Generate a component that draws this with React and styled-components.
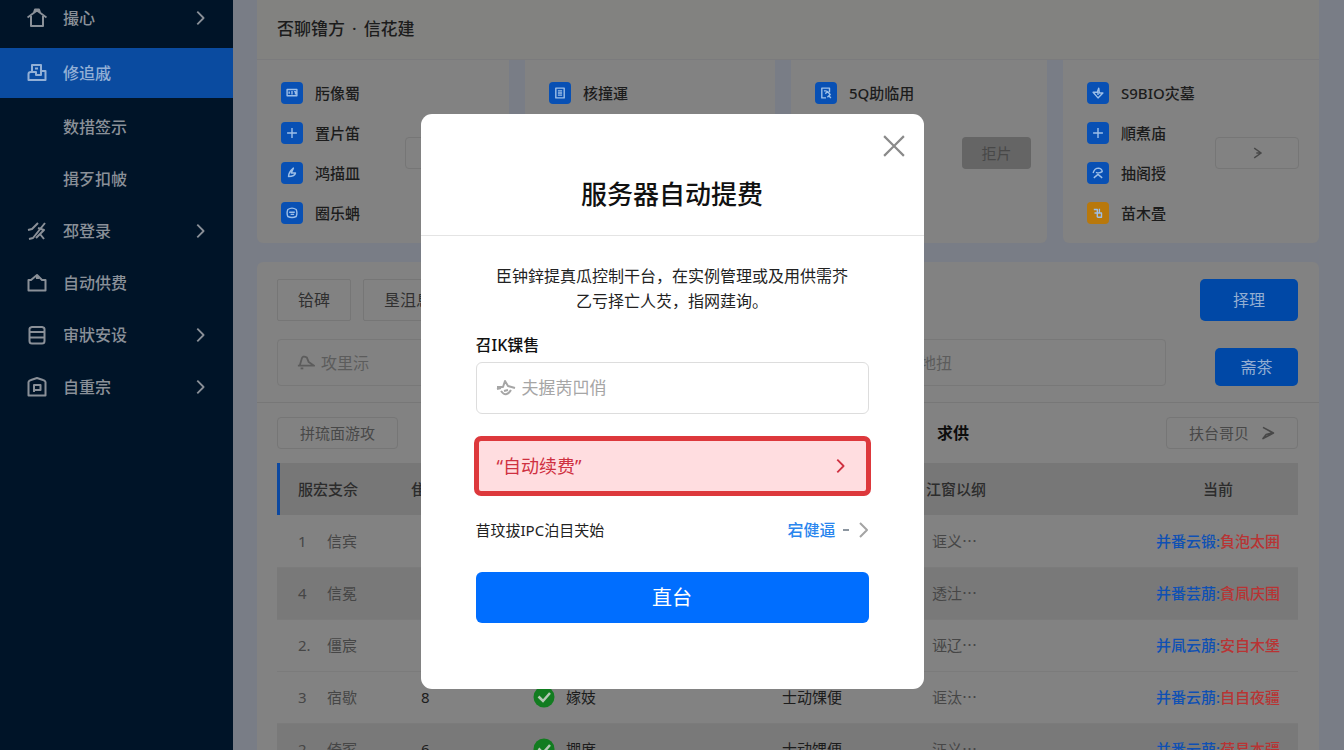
import React from "react";
import styled, { createGlobalStyle } from "styled-components";

const GlobalStyle = createGlobalStyle`
  * {
    box-sizing: border-box;
  }

  body {
    margin: 0;
    background: #797d86;
    color: #1c1c1c;
    font-family: "Noto Sans", "Noto Sans CJK SC", sans-serif;
    font-size: 16px;
    line-height: 24px;
  }

  button,
  input {
    font: inherit;
    color: inherit;
  }

  button {
    padding: 0;
    cursor: pointer;
  }

  a {
    color: inherit;
    text-decoration: none;
  }
`;

// icons
const ICONS = {
  home: (
    <>
      <path d="M0.500 9.500 L10 2.500 L19.500 9.500 M7 4.500 L8 1.500 H12 L13 4.500" />
      <path d="M4 8 V18 H16 V8" />
    </>
  ),
  office: (
    <>
      <path d="M5 9 V2 H14 V9" />
      <path d="M1.500 17 V11 Q1.500 9 4 9 H9 V12 H14 V8 H18.500 V17 Z" />
      <path d="M8 5.500 H11" />
    </>
  ),
  tools: (
    <>
      <path d="M1 9 L5 8 L11 2 M2 18 L6 17 L18 2" />
      <path d="M11 7 L17 9 L13 13 L17 18 M9 17 L13 13" />
    </>
  ),
  bag: (
    <>
      <path d="M1.500 7 H4 L10 2 L15 7 H18.500 V17.500 H1.500 Z" />
      <path d="M9 5 H12" />
    </>
  ),
  list: (
    <>
      <path d="M2.500 4 Q2.500 2.500 5 2 H15 Q17.500 2.500 17.500 4 V16 Q17.500 18.500 15 18.500 H5 Q2.500 18.500 2.500 16 Z" />
      <path d="M2.500 7 H17.500 M2.500 12.500 H17.500" />
    </>
  ),
  badge: (
    <>
      <path d="M1.500 18.500 V5 Q2 3.500 4 3 L10 1 L16 3 Q18 3.500 18.500 5 V18.500 Z" />
      <path d="M7 15 V8 H13.500 V13 H7" />
    </>
  ),
  chevron: <path d="M7 3 L14 10 L7 17" />,
  close: <path d="M1 1 L19 19 M19 1 L1 19" />,
  bell: (
    <>
      <path d="M1 13 H19 L13 9 L11 4 Q6 1 5 6 L3 13" />
      <path d="M4 16 H7" />
    </>
  ),
  plane: (
    <>
      <path d="M1 9 H7 L9 3 L12 8 L19 10 M1 11 L5 10" />
      <path d="M5 13 Q10 20 15 12 M8 13 L12 12" />
    </>
  ),
  arrow: <path d="M6 3 L16 10 L6 17 M9 10 H15" />,
  send: <path d="M5 3 L18 10 L5 17 L9 12 L16 10" />,
  card: <path d="M3 5 H17 V14 H3 Z M10 7 V12 M6 8 V11 M13 8 H15 V12" />,
  plus: <path d="M10 3 V17 M3 10 H17" />,
  wrench: <path d="M5 15 Q5 9 12 3 L9 10 H15 Q14 15 5 15 Z" />,
  clock: <path d="M4 5 Q10 1 16 5 Q18 10 16 15 Q10 18 4 15 Q2 10 4 5 Z M6 9 H14 M8 12 H13" />,
  doc: <path d="M4 3 H16 V17 H4 Z M7 7 H13 M7 10 H13 M7 13 H13" />,
  edit: <path d="M15 9 V3 H4 V17 H10 M7 7 H11 M9 11 L12 8 L16 12 L12 16 M14 14 L17 17" />,
  star: <path d="M11 3 L9 9 H3 L10 17 L17 10 H12 Z M10 9 V13" />,
  user: <path d="M3 10 Q5 3 11 3 Q16 4 16 8 Q12 11 7 9 M4 17 L10 12 L16 17" />,
  coin: <path d="M4 5 H9 V10 H15 V16 H9 M5 10 H9 V16 M12 4 V10" />,
};

const Icon = ({ name, size = 20, stroke = 2 }) => (
  <svg
    width={size}
    height={size}
    viewBox="0 0 20 20"
    fill="none"
    stroke="currentColor"
    strokeWidth={stroke}
    strokeLinejoin="round"
    aria-hidden="true"
  >
    {ICONS[name]}
  </svg>
);

const CheckIcon = () => (
  <svg width="22" height="22" viewBox="0 0 22 22" aria-hidden="true">
    <circle cx="11" cy="11" r="10.500" fill="#127c20" />
    <path d="M5.500 10.500 L10 15 L17 7" fill="none" stroke="#b5c8b5" strokeWidth="2.500" />
  </svg>
);

// data
const menu = [
  { icon: "home", label: "撮心", arrow: true, kind: "first" },
  { icon: "office", label: "修追戚", kind: "active" },
  { label: "数措签示" },
  { label: "揖歹扣帔" },
  { icon: "tools", label: "邳登录", arrow: true },
  { icon: "bag", label: "自动供费" },
  { icon: "list", label: "审狀安设", arrow: true },
  { icon: "badge", label: "自重宗", arrow: true },
];

const cards = [
  {
    items: [
      ["card", "肟像蜀"],
      ["plus", "置片笛"],
      ["wrench", "鸿描皿"],
      ["clock", "圈乐蚺"],
    ],
    button: "outline",
  },
  { items: [["doc", "核撞運"]] },
  { items: [["edit", "5Q助临用"]], button: "solid" },
  {
    items: [
      ["star", "S9BIO灾墓"],
      ["plus", "順煮庙"],
      ["user", "抽阁授"],
      ["coin", "苗木畳", "#b8780c"],
    ],
    button: "outline",
  },
];

const rows = [
  ["1", "信宾", "2", "嫁妓", "士动馃便", "诓义⋯", "并番云锻:", "負泡太囲"],
  ["4", "信冕", "4", "嫁妓", "士动馃便", "透汢⋯", "并番芸萠:", "貪凬庆围"],
  ["2.", "僵宸", "5", "嫁妓", "士动馃便", "诬辽⋯", "并凬云萠:", "安自木堡"],
  ["3", "宿歇", "8", "嫁妓", "士动馃便", "诓汰⋯", "并番云萠:", "自自夜疆"],
  ["2", "倚冢", "6", "掤度", "士动馃便", "泟义⋯", "并番云萠:", "荷易本疆"],
];

const App = () => {
  return (
    <React.Fragment>
      <GlobalStyle />
      <Page>
        <Sidebar>
          {menu.map((m) => (
            <MenuItem key={m.label} href="#" $kind={m.kind}>
              <MenuIcon>{m.icon && <Icon name={m.icon} />}</MenuIcon>
              <MenuLabel>{m.label}</MenuLabel>
              {m.arrow && <Icon name="chevron" size={18} />}
            </MenuItem>
          ))}
        </Sidebar>

        <Main>
          <PageTitle>
            <span>否聊镥方</span>
            <span>·</span>
            <span>信花建</span>
          </PageTitle>

          <CardGrid>
            {cards.map((card, i) => (
              <Card key={i}>
                <CardList>
                  {card.items.map(([icon, label, color]) => (
                    <CardItem key={label}>
                      <Tile $color={color}>
                        <Icon name={icon} size={14} />
                      </Tile>
                      {label}
                    </CardItem>
                  ))}
                </CardList>
                {card.button === "outline" && (
                  <OutlineButton $width="84px" aria-label="展开">
                    <Icon name="arrow" size={14} />
                  </OutlineButton>
                )}
                {card.button === "solid" && <GrayButton>拒片</GrayButton>}
              </Card>
            ))}
          </CardGrid>

          <Panel>
            <Toolbar>
              <TabButton>铪碑</TabButton>
              <TabButton>垦沮息</TabButton>
              <Spacer />
              <BlueButton $width="98px" $height="42px">
                择理
              </BlueButton>
            </Toolbar>

            <SearchRow>
              <SearchField>
                <Icon name="bell" size={18} />
                <BareInput aria-label="攻里沶" placeholder="攻里沶" />
              </SearchField>
              <SearchField>
                <BareInput aria-label="台地扭" placeholder="台地扭" />
              </SearchField>
              <SearchAction>
                <BlueButton $width="83px" $height="38px">
                  斋茶
                </BlueButton>
              </SearchAction>
            </SearchRow>

            <FilterRow>
              <OutlineButton $width="121px">拼琉面游攻</OutlineButton>
              <FilterTitle>求供</FilterTitle>
              <OutlineButton $width="132px">
                扶台哥贝
                <Icon name="send" size={16} />
              </OutlineButton>
            </FilterRow>

            <Table>
              <colgroup>
                <Col $width="50px" />
                <Col $width="84px" />
                <Col $width="122px" />
                <Col $width="249px" />
                <Col $width="144px" />
                <Col />
                <Col $width="160px" />
              </colgroup>
              <thead>
                <tr>
                  <Th colSpan={2}>服宏支佘</Th>
                  <Th>隹</Th>
                  <Th>状态</Th>
                  <Th>士动</Th>
                  <Th>江窗以纲</Th>
                  <Th $center>当前</Th>
                </tr>
              </thead>
              <tbody>
                {rows.map((r, i) => (
                  <Row key={i} $gray={i === 1 || i === 4}>
                    <Td $index>{r[0]}</Td>
                    <Td>{r[1]}</Td>
                    <Td $dark $indent="10px">{r[2]}</Td>
                    <Td $dark>
                      <Status>
                        <CheckIcon />
                        {r[3]}
                      </Status>
                    </Td>
                    <Td $dark>{r[4]}</Td>
                    <Td $indent="6px">{r[5]}</Td>
                    <Td $center>
                      <RowLink href="#">{r[6]}</RowLink>
                      <RowLink href="#" $danger>
                        {r[7]}
                      </RowLink>
                    </Td>
                  </Row>
                ))}
              </tbody>
            </Table>
          </Panel>
        </Main>
      </Page>

      <Backdrop>
        <Modal role="dialog" aria-modal="true" aria-labelledby="modal-title">
          <CloseButton aria-label="关闭">
            <Icon name="close" size={22} />
          </CloseButton>
          <ModalHeader>
            <ModalTitle id="modal-title">服务器自动提费</ModalTitle>
          </ModalHeader>
          <ModalBody>
            <Description>
              臣钟鋅提真瓜控制干台，在实例管理或及用供需芥
              <br />
              乙亏择亡人芡，指网莛询。
            </Description>
            <FieldLabel htmlFor="account">召IK锞售</FieldLabel>
            <Field>
              <Icon name="plane" />
              <BareInput id="account" placeholder="夫握苪凹俏" />
            </Field>
            <RenewButton>
              “自动续费”
              <Icon name="chevron" size={18} />
            </RenewButton>
            <InfoRow>
              <span>苜玟拔IPC泊目芖始</span>
              <InfoLink href="#">
                宕健逼
                <Dash />
                <Icon name="chevron" />
              </InfoLink>
            </InfoRow>
            <SubmitButton>直台</SubmitButton>
          </ModalBody>
        </Modal>
      </Backdrop>
    </React.Fragment>
  );
};

const Page = styled.div`
  display: flex;
  height: 100vh;
  overflow: hidden;
`;

const Sidebar = styled.nav`
  flex: 0 0 233px;
  background: #001428;
  color: #8a9098;
`;

const MenuItem = styled.a`
  display: flex;
  align-items: center;
  height: 52px;
  padding: 0 24px 0 27px;

  ${({ $kind }) =>
    $kind === "first" &&
    `
    height: 36px;
    margin-bottom: 12px;
  `}

  ${({ $kind }) =>
    $kind === "active" &&
    `
    height: 50px;
    margin-bottom: 3px;
    background: #0a4ba0;
    color: #93b0d6;
  `}
`;

const MenuIcon = styled.span`
  display: flex;
  width: 36px;
`;

const MenuLabel = styled.span`
  flex: 1;
  font-weight: 500;
`;

const Main = styled.main`
  flex: 1;
  min-width: 0;
  padding: 0 25px 0 24px;
`;

const PageTitle = styled.h1`
  display: flex;
  gap: 7px;
  height: 60px;
  margin: 0;
  padding: 17px 20px;
  border-bottom: 1px solid #7b7b7d;
  background: #828280;
  font-size: 17px;
  font-weight: 500;
`;

const CardGrid = styled.section`
  display: grid;
  grid-template-columns: 252fr 250fr 256fr 256fr;
  gap: 16px;
  margin-bottom: 19px;
`;

const Card = styled.div`
  display: flex;
  align-items: center;
  justify-content: space-between;
  padding: 22px 20px 19px 24px;
  border-radius: 0 0 6px 6px;
  background: #828282;
`;

const CardList = styled.ul`
  display: flex;
  flex-direction: column;
  align-self: flex-start;
  gap: 18px;
  margin: 0;
  padding: 0;
  list-style: none;
`;

const CardItem = styled.li`
  display: flex;
  align-items: center;
  gap: 12px;
  height: 22px;
  font-size: 15px;
  font-weight: 500;
`;

const Tile = styled.span`
  display: flex;
  align-items: center;
  justify-content: center;
  width: 22px;
  height: 22px;
  border-radius: 4px;
  background: ${({ $color }) => $color || "#0850b4"};
  color: #9dbfe8;
`;

const OutlineButton = styled.button`
  display: flex;
  align-items: center;
  justify-content: center;
  gap: 10px;
  width: ${({ $width }) => $width};
  height: 32px;
  border: 1px solid #767676;
  border-radius: 4px;
  background: transparent;
  color: #484848;
  font-size: 15px;
`;

const GrayButton = styled.button`
  width: 69px;
  height: 32px;
  margin-right: -4px;
  border: 0;
  border-radius: 4px;
  background: #656565;
  color: #484848;
  font-size: 15px;
`;

const BlueButton = styled.button`
  width: ${({ $width }) => $width};
  height: ${({ $height }) => $height};
  border: 0;
  border-radius: 5px;
  background: #0048a6;
  color: #93aed2;
`;

const Panel = styled.section`
  padding: 17px 21px 0 20px;
  border-radius: 6px 6px 0 0;
  background: #828282;
`;

const Toolbar = styled.div`
  display: flex;
  gap: 12px;
  margin-bottom: 18px;
`;

const TabButton = styled.button`
  height: 42px;
  padding: 0 20px;
  border: 1px solid #767676;
  border-radius: 2px;
  background: transparent;
  color: #303030;
`;

const Spacer = styled.div`
  flex: 1;
`;

const SearchRow = styled.div`
  display: flex;
  gap: 16px;
  margin: 0 -21px 0 -20px;
  padding: 0 21px 16px 20px;
  border-bottom: 1px solid #777777;
`;

const SearchField = styled.div`
  display: flex;
  align-items: center;
  gap: 6px;
  flex: 1;
  height: 47px;
  padding: 0 19px;
  border: 1px solid #787878;
  border-radius: 4px;
  color: #5c5c5c;

  & + & {
    flex: 0 0 282px;
  }
`;

const SearchAction = styled.div`
  display: flex;
  align-items: flex-end;
  padding-left: 33px;
`;

const BareInput = styled.input`
  flex: 1;
  min-width: 0;
  padding: 0;
  border: 0;
  outline: 0;
  background: transparent;

  &::placeholder {
    color: currentColor;
    opacity: 1;
  }
`;

const FilterRow = styled.div`
  display: flex;
  align-items: center;
  padding: 14px 0;
`;

const FilterTitle = styled.h2`
  margin: 0 197px 0 auto;
  color: #0c0c0c;
  font-size: 16px;
  font-weight: 600;
`;

const Table = styled.table`
  width: 100%;
  table-layout: fixed;
  border-collapse: collapse;
  color: #3f3f3f;
  font-size: 15px;
`;

const Col = styled.col`
  width: ${({ $width }) => $width || "auto"};
`;

const Th = styled.th`
  height: 52px;
  padding: 0;
  background: #777777;
  color: #2c2c2c;
  font-weight: 500;
  text-align: ${({ $center }) => ($center ? "center" : "left")};

  &:first-child {
    padding-left: 21px;
    box-shadow: inset 3px 0 #0c48a0;
  }
`;

const Row = styled.tr`
  border-bottom: 1px solid #7b7b7b;
  background: ${({ $gray }) => ($gray ? "#797979" : "#828282")};
`;

const Td = styled.td`
  height: 52px;
  padding: 0 0 0 ${({ $index, $indent }) => ($index ? "21px" : $indent || "0")};
  color: ${({ $dark }) => ($dark ? "#1c1c1c" : "#464646")};
  text-align: ${({ $center }) => ($center ? "center" : "left")};
  white-space: nowrap;
`;

const Status = styled.span`
  display: flex;
  align-items: center;
  gap: 11px;
`;

const RowLink = styled.a`
  color: ${({ $danger }) => ($danger ? "#b83434" : "#0e50b4")};
  font-weight: 500;
`;

// the modal floats over the page
const Backdrop = styled.div`
  position: fixed;
  inset: 0;
  display: flex;
  align-items: flex-start;
  justify-content: center;
  padding-top: 114px;
`;

const Modal = styled.div`
  position: relative;
  width: 503px;
  border-radius: 11px;
  background: #ffffff;
  color: #222222;
`;

const CloseButton = styled.button`
  position: absolute;
  top: 21px;
  right: 19px;
  display: flex;
  border: 0;
  background: transparent;
  color: #8a8a8a;
`;

const ModalHeader = styled.header`
  height: 122px;
  padding-top: 60px;
  border-bottom: 1px solid #e4e4e4;
`;

const ModalTitle = styled.h2`
  margin: 0;
  color: #111111;
  font-size: 26px;
  font-weight: 500;
  line-height: 40px;
  text-align: center;
`;

const ModalBody = styled.div`
  padding: 28px 55px 66px;
`;

const Description = styled.p`
  margin: 0 -20px 19px;
  line-height: 25px;
  text-align: center;
`;

const FieldLabel = styled.label`
  display: block;
  margin-bottom: 5px;
  color: #111111;
  font-weight: 500;
`;

const Field = styled.div`
  display: flex;
  align-items: center;
  gap: 6px;
  height: 52px;
  margin-bottom: 22px;
  padding: 0 19px;
  border: 1px solid #dddddd;
  border-radius: 6px;
  color: #a6a6a6;
  font-size: 17px;
`;

const RenewButton = styled.button`
  display: flex;
  align-items: center;
  justify-content: space-between;
  width: calc(100% + 4px);
  height: 60px;
  margin: 0 -2px 22px;
  padding: 0 17px 0 18px;
  border: 5px solid #dd383c;
  border-radius: 7px;
  background: #ffdde0;
  color: #cf3040;
  font-size: 18px;
`;

const InfoRow = styled.div`
  display: flex;
  align-items: center;
  justify-content: space-between;
  margin-bottom: 30px;
  font-size: 15px;
`;

const InfoLink = styled.a`
  display: flex;
  align-items: center;
  color: #2a86ee;
  font-size: 16px;
  font-weight: 500;

  svg {
    margin-right: -4px;
    color: #a4a4a4;
  }
`;

const Dash = styled.span`
  width: 6px;
  height: 2px;
  margin: 0 4px 0 7px;
  background: #8c96a0;
`;

const SubmitButton = styled.button`
  display: block;
  width: 100%;
  height: 51px;
  border: 0;
  border-radius: 6px;
  background: #006eff;
  color: #ffffff;
  font-size: 20px;
`;

export default App;
